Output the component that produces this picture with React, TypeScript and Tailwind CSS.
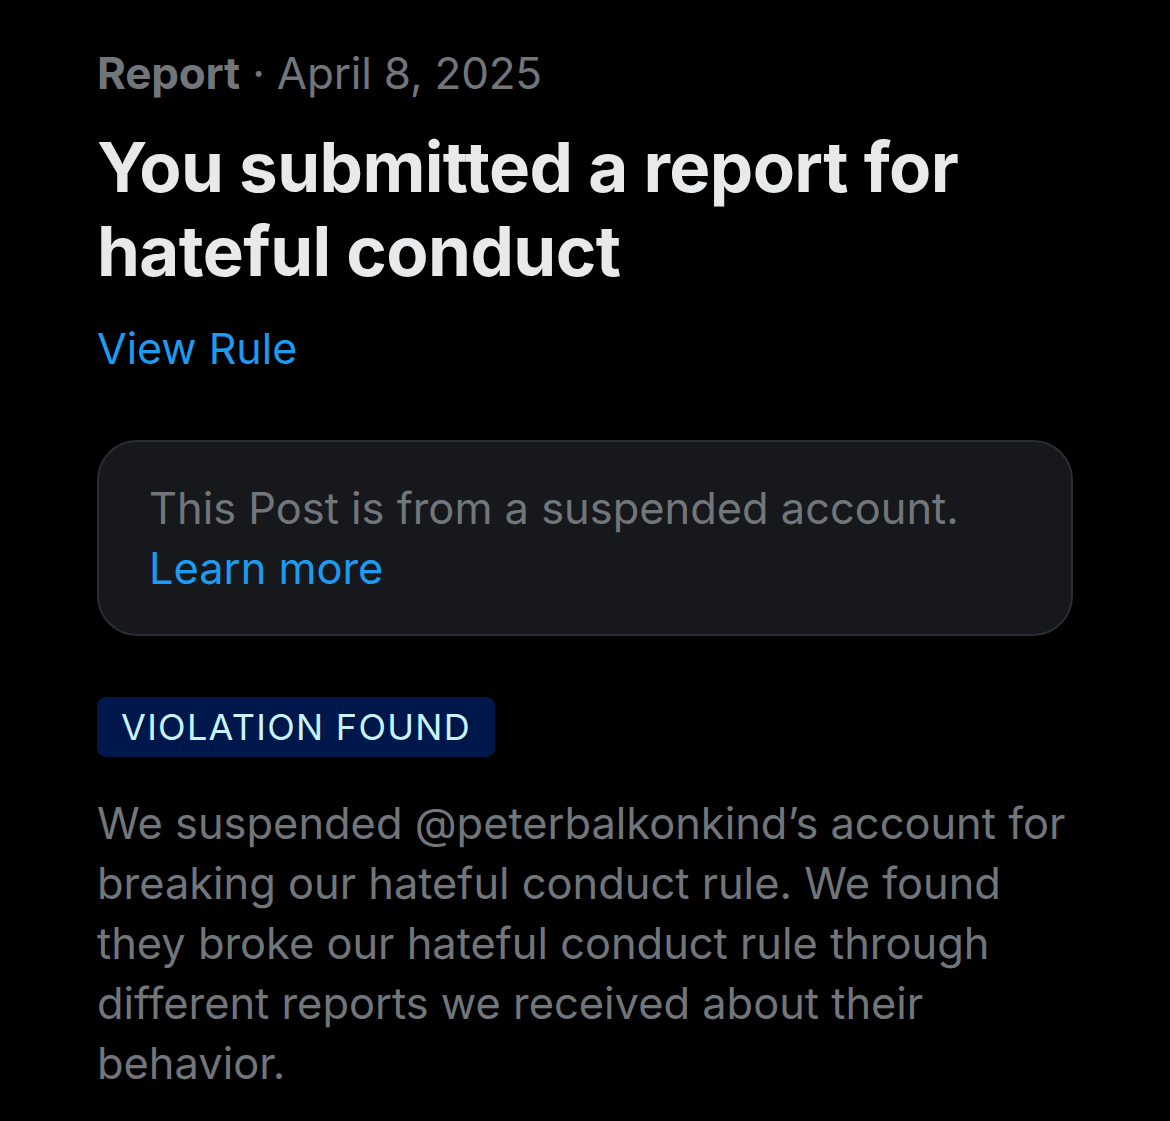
export default function App() {
  return (
    <div
      className="min-h-[1121px] w-full bg-black px-[97px] pt-[46px] text-[#71767b]"
      style={{ fontFamily: 'Inter, "Noto Sans", sans-serif' }}
    >
      {/* Meta line */}
      <p className="text-[44px] leading-[54px] tracking-[-0.2px]">
        <span className="font-bold">Report</span> · April 8, 2025
      </p>

      {/* Title */}
      <h1 className="mt-[25px] text-[69px] font-bold leading-[84px] tracking-[-0.6px] text-[#e7e9ea]">
        You submitted a report for hateful conduct
      </h1>

      <a className="mt-[27px] block text-[43px] leading-[56px] text-[#1d9bf0]">View Rule</a>

      {/* Suspended post notice */}
      <div className="mt-[64px] rounded-[40px] border-2 border-[#2a2d31] bg-[#17181c] px-[50px] py-[36px]">
        <p className="text-[43.4px] leading-[60px]">
          This Post is from a suspended account.{' '}
          <a className="text-[#1d9bf0]">Learn more</a>
        </p>
      </div>

      {/* Status badge */}
      <div className="mt-[61px] inline-flex h-[60px] items-center rounded-[9px] bg-[#00174b] px-[24px] text-[36px] tracking-[1.3px] text-[#c8f3ff]">
        VIOLATION FOUND
      </div>

      <p className="mt-[36px] text-[43.4px] leading-[60px]">
        We suspended @peterbalkonkind’s account for breaking our hateful conduct rule. We found they broke our
        hateful conduct rule through different reports we received about their behavior.
      </p>
    </div>
  )
}
